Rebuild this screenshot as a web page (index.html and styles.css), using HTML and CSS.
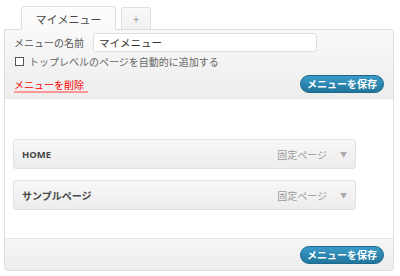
FILE: index.html
```html
<!DOCTYPE html>
<html lang="ja">
<head>
<meta charset="utf-8">
<link rel="stylesheet" href="styles.css">
</head>
<body>
<div class="tabs">
  <div class="tab active">マイメニュー</div>
  <div class="tab add">+</div>
</div>
<div class="box">
  <div class="header">
    <div class="row name-row">
      <label class="label">メニューの名前</label>
      <div class="input">マイメニュー</div>
    </div>
    <div class="row check-row">
      <span class="checkbox"></span>
      <span class="check-text">トップレベルのページを自動的に追加する</span>
    </div>
    <div class="row action-row">
      <a class="delete">メニューを削除</a>
      <button class="save">メニューを保存</button>
    </div>
  </div>
  <div class="body">
    <div class="item">
      <span class="item-title en">HOME</span>
      <span class="item-type">固定ページ</span>
      <span class="arrow">▼</span>
    </div>
    <div class="item">
      <span class="item-title">サンプルページ</span>
      <span class="item-type">固定ページ</span>
      <span class="arrow">▼</span>
    </div>
  </div>
  <div class="footer">
    <button class="save">メニューを保存</button>
  </div>
</div>
</body>
</html>
```
FILE: styles.css
```css
* { box-sizing: border-box; }
body {
  margin: 0;
  background: #fff;
  font-family: "Noto Sans CJK JP", "Noto Sans", sans-serif;
  color: #555;
  width: 400px;
  height: 276px;
  overflow: hidden;
}
.tabs {
  display: flex;
  gap: 5px;
  padding: 6px 0 0 21px;
  height: 29px;
  align-items: flex-end;
}
.tab {
  height: 23px;
  border: 1px solid #dfdfdf;
  border-bottom: none;
  border-radius: 3px 3px 0 0;
  background: linear-gradient(#fdfdfd, #f6f6f6);
  display: flex;
  align-items: center;
  justify-content: center;
  font-size: 11px;
  color: #464646;
}
.tab.active { width: 95px; height: 24px; margin-bottom: -1px; position: relative; z-index: 1; background: linear-gradient(#fdfdfd, #f9f9f9); }
.tab.add { width: 30px; height: 22px; color: #999; font-size: 11px; background: linear-gradient(#f9f9f9, #f1f1f1); }
.box {
  margin-left: 4px;
  width: 390px;
  height: 242px;
  border: 1px solid #dfdfdf;
  border-radius: 0 3px 3px 3px;
  display: flex;
  flex-direction: column;
  overflow: hidden;
}
.header {
  height: 69px;
  background: linear-gradient(#f9f9f9, #ededed);
  border-bottom: 1px solid #e6e6e6;
  padding: 2px 9px 0 9px;
}
.row { display: flex; align-items: center; }
.name-row { height: 20px; }
.label { font-size: 10px; color: #555; width: 79px; }
.input {
  width: 224px;
  height: 19px;
  background: #fff;
  border: 1px solid #dfdfdf;
  border-radius: 3px;
  font-size: 10.5px;
  color: #333;
  padding: 0 5px;
  display: flex;
  align-items: center;
}
.check-row { height: 18px; gap: 5px; }
.checkbox {
  width: 9px; height: 9px;
  border: 1px solid #555;
  background: #fff;
  margin-left: 1px;
}
.check-text { font-size: 10px; color: #666; }
.action-row { justify-content: space-between; margin-top: 5px; height: 18px; }
.delete {
  font-size: 10px;
  color: #f00;
  text-decoration: none;
  border-bottom: 2px solid #f99;
  line-height: 13px;
  padding-right: 4px;
  margin-top: 2px;
}
.save {
  width: 84px;
  height: 18px;
  border: 1px solid #1d6a8c;
  border-radius: 9px;
  background: linear-gradient(#3a9ac8, #21759b);
  color: #fff;
  font-family: inherit;
  font-size: 10px;
  font-weight: bold;
  padding: 0;
  line-height: 16px;
}
.body {
  flex: 1;
  background: #fff;
  padding: 40px 0 0 8px;
  display: flex;
  flex-direction: column;
  gap: 11px;
}
.item {
  width: 343px;
  height: 30px;
  border: 1px solid #e2e2e2;
  border-radius: 3px;
  background: linear-gradient(#f8f8f8, #ececec);
  display: flex;
  align-items: center;
  padding: 0 8px 0 8px;
  font-size: 10px;
}
.item-title { flex: 1; color: #464646; font-weight: bold; }
.item-title.en { font-family: "Open Sans", "Noto Sans", sans-serif; font-size: 9.5px; }
.item-type { color: #999; font-size: 10px; margin-right: 13px; }
.arrow { color: #aaa; font-size: 7px; }
.footer {
  height: 32px;
  background: linear-gradient(#f6f6f6, #ececec);
  border-top: 1px solid #e6e6e6;
  display: flex;
  align-items: center;
  justify-content: flex-end;
  padding: 1px 9px 0 0;
}
```
